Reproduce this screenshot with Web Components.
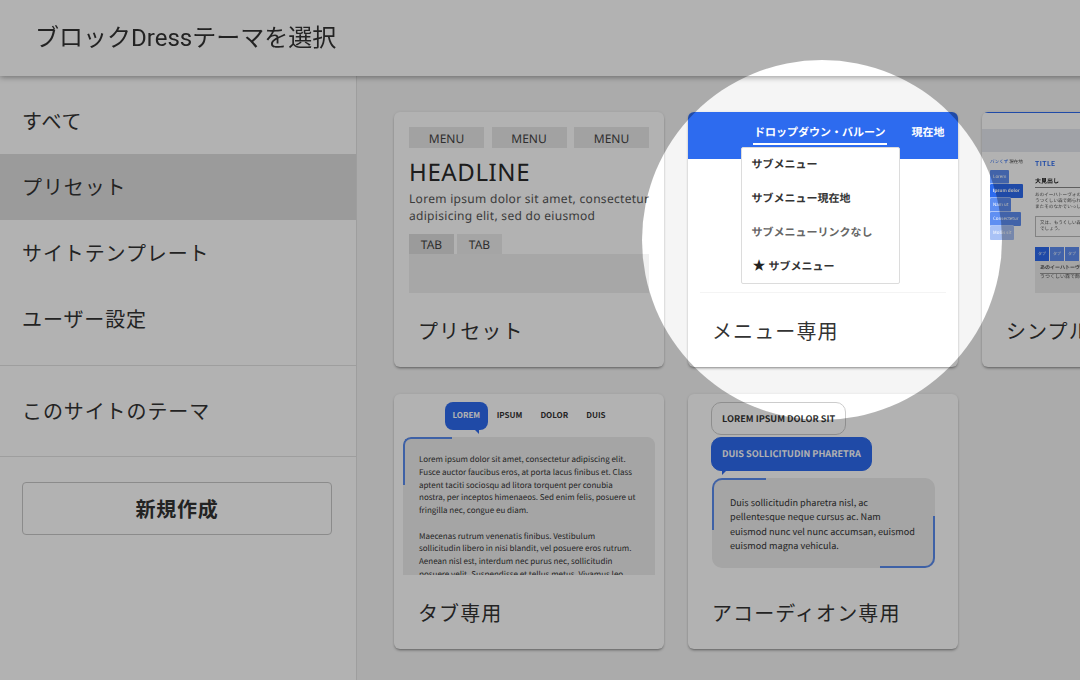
<!DOCTYPE html>
<html lang="ja">
<head>
<meta charset="utf-8">
<title>ブロックDressテーマを選択</title>
<style>
  html, body { margin: 0; height: 100%; overflow: hidden; background: #f5f5f5; }
  body { font-family: Roboto, "Noto Sans CJK JP", sans-serif; color: #333; }
</style>
</head>
<body>
<theme-dialog>
  <span slot="title">ブロックDressテーマを選択</span>
  <theme-sidebar slot="sidebar"></theme-sidebar>
  <theme-card>
    <preset-thumb></preset-thumb>
    <span slot="label">プリセット</span>
  </theme-card>
  <theme-card>
    <menu-thumb></menu-thumb>
    <span slot="label">メニュー専用</span>
  </theme-card>
  <theme-card>
    <simple-thumb></simple-thumb>
    <span slot="label">シンプル</span>
  </theme-card>
  <theme-card>
    <tab-thumb></tab-thumb>
    <span slot="label">タブ専用</span>
  </theme-card>
  <theme-card>
    <accordion-thumb></accordion-thumb>
    <span slot="label">アコーディオン専用</span>
  </theme-card>
</theme-dialog>
<spot-light></spot-light>

<script>
const JP = `Roboto, "Noto Sans CJK JP", sans-serif`;
const THUMB = `"Noto Sans CJK JP", sans-serif`;

class ThemeDialog extends HTMLElement {
  constructor() {
    super();
    this.attachShadow({ mode: "open" });
  }
  connectedCallback() {
    this.shadowRoot.innerHTML = /*html*/ `
      <style>
        :host { display: grid; grid-template-columns: 357px 1fr; grid-template-rows: 76px 1fr;
          width: 1080px; height: 680px; overflow: hidden; font-family: ${JP}; filter: blur(.45px); }
        .header { grid-column: 1 / 3; position: relative; z-index: 2; background: #fff;
          display: flex; align-items: center; padding: 0 35px 6px; font-size: 24px; color: #333;
          box-shadow: 0 1px 6px rgba(0,0,0,.4); }
        .side { border-right: 1px solid #e2e2e2; background: #fff; }
        .cards { display: grid; grid-template-columns: repeat(3, 270px); grid-auto-rows: 255px;
          column-gap: 24px; row-gap: 27px; padding: 36px 0 0 37px; background: #f5f5f5; }
      </style>
      <div class="header"><slot name="title"></slot></div>
      <div class="side"><slot name="sidebar"></slot></div>
      <div class="cards"><slot></slot></div>
    `;
  }
}

class ThemeSidebar extends HTMLElement {
  constructor() {
    super();
    this.attachShadow({ mode: "open" });
  }
  connectedCallback() {
    this.shadowRoot.innerHTML = /*html*/ `
      <style>
        :host { display: block; }
        .group { padding: 12px 0 13px; border-bottom: 1px solid #e2e2e2; }
        .group--last { padding-bottom: 12px; }
        .item { height: 66px; box-sizing: border-box; display: flex; align-items: center; padding: 0 0 2px 22px;
          font-size: 20px; letter-spacing: .9px; color: #333; }
        .item--on { background: #dfdfdf; }
        .action { padding: 25px 24px 0 22px; }
        .button { height: 53px; box-sizing: border-box; display: flex; align-items: center; justify-content: center;
          border: 1.5px solid #c8c8c8; border-radius: 4px; font-size: 20px; font-weight: 700; letter-spacing: .8px; color: #333; }
      </style>
      <div class="group">
        <div class="item">すべて</div>
        <div class="item item--on">プリセット</div>
        <div class="item">サイトテンプレート</div>
        <div class="item">ユーザー設定</div>
      </div>
      <div class="group group--last">
        <div class="item">このサイトのテーマ</div>
      </div>
      <div class="action"><div class="button">新規作成</div></div>
    `;
  }
}

class ThemeCard extends HTMLElement {
  constructor() {
    super();
    this.attachShadow({ mode: "open" });
  }
  connectedCallback() {
    this.shadowRoot.innerHTML = /*html*/ `
      <style>
        :host { display: flex; flex-direction: column; background: #fff; border-radius: 6px; overflow: hidden;
          box-shadow: 0 2px 3px -1px rgba(0,0,0,.45), 0 0 3px rgba(0,0,0,.08); }
        .thumb { height: 181px; overflow: hidden; position: relative; flex: none; text-rendering: geometricPrecision; }
        .label { flex: 1; display: flex; align-items: center; padding: 0 24px; white-space: nowrap;
          font-size: 20px; letter-spacing: 1.1px; color: #333; }
      </style>
      <div class="thumb"><slot></slot></div>
      <div class="label"><slot name="label"></slot></div>
    `;
  }
}

class PresetThumb extends HTMLElement {
  constructor() {
    super();
    this.attachShadow({ mode: "open" });
  }
  connectedCallback() {
    this.shadowRoot.innerHTML = /*html*/ `
      <style>
        :host { display: block; padding: 15px 15px 0; font-family: "Noto Sans", sans-serif; color: #333; }
        .menu { display: grid; grid-template-columns: repeat(3, 75px); column-gap: 7.5px; }
        .menu span { height: 21px; padding-top: 2px; box-sizing: border-box; background: #e9e9e9; display: flex; align-items: center; justify-content: center;
          font-size: 12px; color: #444; }
        h3 { margin: 11px 0 0; font-size: 24px; line-height: 28px; font-weight: 400; letter-spacing: .6px; color: #2a2a2a; }
        p { margin: 3px 0 0; font-size: 12px; line-height: 17px; color: #555; white-space: nowrap; letter-spacing: .3px; }
        .tabs { display: flex; gap: 3px; margin-top: 10px; }
        .tabs span { width: 45px; height: 20px; background: #ededed; display: flex; align-items: center; justify-content: center;
          font-size: 12px; color: #444; }
        .tabs span:first-child { background: #dfdfdf; }
        .panel { height: 39px; background: #f0f0f0; }
      </style>
      <div class="menu"><span>MENU</span><span>MENU</span><span>MENU</span></div>
      <h3>HEADLINE</h3>
      <p>Lorem ipsum dolor sit amet, consectetur<br>adipisicing elit, sed do eiusmod</p>
      <div class="tabs"><span>TAB</span><span>TAB</span></div>
      <div class="panel"></div>
    `;
  }
}

class MenuThumb extends HTMLElement {
  constructor() {
    super();
    this.attachShadow({ mode: "open" });
  }
  connectedCallback() {
    this.shadowRoot.innerHTML = /*html*/ `
      <style>
        :host { display: block; height: 180px; border-bottom: 1px solid #f4f4f4; margin: 0 12px; position: relative;
          font-family: ${THUMB}; font-size: 11px; font-weight: 700; }
        .bar { margin: 0 -12px; height: 47px; background: #2d6bef; box-sizing: border-box; padding: 12px 0 0 65px;
          display: flex; gap: 24.5px; color: #fff; }
        .bar span { line-height: 16px; height: 19px; white-space: nowrap; }
        .bar .on { border-bottom: 2px solid #fff; padding: 0 1.5px 0 1px; }
        .drop { position: absolute; left: 40.5px; top: 35px; width: 159.5px; height: 137px; box-sizing: border-box;
          background: #fff; border: 1.5px solid #dcdcdc; border-radius: 2px; padding-left: 10px;
          display: grid; grid-auto-rows: 34px; align-items: start; color: #333; }
        .drop > span { line-height: 33px; white-space: nowrap; }
        .drop .off { color: #666; }
        .star { font-size: 13px; line-height: 11px; margin: 0 3px 0 1px; color: #222; }
      </style>
      <div class="bar"><span class="on">ドロップダウン・バルーン</span><span>現在地</span></div>
      <div class="drop">
        <span>サブメニュー</span>
        <span>サブメニュー現在地</span>
        <span class="off">サブメニューリンクなし</span>
        <span><span class="star">★</span>サブメニュー</span>
      </div>
    `;
  }
}

class SimpleThumb extends HTMLElement {
  constructor() {
    super();
    this.attachShadow({ mode: "open" });
  }
  connectedCallback() {
    this.shadowRoot.innerHTML = /*html*/ `
      <style>
        :host { display: block; height: 181px; font-family: ${THUMB}; font-size: 5px; line-height: 6px; color: #555;
          border-top: 1px solid #2d6bef; box-sizing: border-box; position: relative; filter: blur(.5px); }
        .top { height: 16px; text-align: center; font-weight: 700; line-height: 16px; padding-left: 180px; }
        .hero { height: 23px; background: #e6e9f0; }
        .body { display: grid; grid-template-columns: 45px 1fr; padding: 7px 0 0 8px; }
        .crumb { font-size: 4.5px; white-space: nowrap; color: #444; }
        .crumb b { color: #2d6bef; font-weight: 400; }
        .list { display: flex; flex-direction: column; align-items: flex-start; margin-top: 5px; }
        .list span { background: #5f8ff2; color: #fff; font-size: 4.5px; height: 14px; line-height: 14px; padding: 0 3px; border-radius: 1px;
          white-space: nowrap; box-shadow: 0 0 0 .5px #fff; }
        .list .on { background: #2d6bef; font-weight: 700; }
        .list .faded { background: #a9c2f6; }
        h4 { margin: 0; font-size: 7px; line-height: 10px; color: #2d6bef; letter-spacing: .5px; font-family: Lato, sans-serif; }
        h5 { margin: 7px 0 0; padding-bottom: 2px; border-bottom: 1px solid #888; font-size: 6px; line-height: 9px; color: #222; }
        p { margin: 4px 0 0; white-space: nowrap; font-size: 4.6px; }
        .box { margin-top: 6px; height: 21px; border: 1px solid #bbb; padding: 3px 4px; box-sizing: border-box; white-space: nowrap; font-size: 4.6px; }
        .tabs { display: flex; gap: 1px; margin-top: 10px; }
        .tabs span { width: 14px; height: 14px; background: #5f8ff2; color: #fff; font-size: 4px; line-height: 14px; text-align: center; }
        .tabs span:first-child { background: #2d6bef; }
        .panel { background: #ececec; height: 40px; padding: 4px 5px; box-sizing: border-box; white-space: nowrap; }
        .panel div { border-bottom: 1px solid #999; padding-bottom: 2px; font-weight: 700; }
      </style>
      <div class="top">Site title</div>
      <div class="hero"></div>
      <div class="body">
        <div>
          <div class="crumb"><b>パンくず</b> 現在地</div>
          <div class="list">
            <span>Lorem</span>
            <span class="on">Ipsum dolor</span>
            <span>Nam ut</span>
            <span>Consectetur</span>
            <span class="faded">Mollis sit</span>
          </div>
        </div>
        <div>
          <h4>TITLE</h4>
          <h5>大見出し</h5>
          <p>あのイーハトーヴォのすきとおった風、夏でも底に冷たさをもつ青いそら<br>うつくしい森で飾られたモリーオ市、郊外のぎらぎらひかる草の波<br>またそのなかでいっしょになったたくさんのひとたち</p>
          <div class="box">又は、もうくしい森で飾られたモリーオ市<br>でしょう。</div>
          <div class="tabs"><span>タブ</span><span>タブ</span><span>タブ</span><span>タブ</span></div>
          <div class="panel"><div>あのイーハトーヴォ</div>うつくしい森で飾られた</div>
        </div>
      </div>
    `;
  }
}

class TabThumb extends HTMLElement {
  constructor() {
    super();
    this.attachShadow({ mode: "open" });
  }
  connectedCallback() {
    this.shadowRoot.innerHTML = /*html*/ `
      <style>
        :host { display: block; height: 181px; box-sizing: border-box; padding: 8px 9px 0; font-family: ${THUMB}; color: #333; }
        .nav { display: flex; padding-left: 42px; height: 28px; align-items: center;
          font-size: 8px; font-weight: 700; }
        .nav span { padding: 0 9px; line-height: 28px; }
        .nav .on { position: relative; background: #2d6bef; color: #fff; border-radius: 8px; padding: 0 7.5px; }
        .nav .on::after { content: ""; position: absolute; right: 9px; bottom: -4px; border-top: 4px solid #2d6bef; border-left: 4px solid transparent; }
        .panel { position: relative; margin-top: 7px; height: 138px; background: #ececec; border-radius: 8px 8px 0 0;
          padding: 17px 0 0 16px; box-sizing: border-box; font-size: 8px; line-height: 12.8px; white-space: nowrap; overflow: hidden; }
        .panel::before { content: ""; position: absolute; left: 0; top: 0; width: 49px; height: 48px; box-sizing: border-box;
          border: solid #5a8bee; border-width: 2px 0 0 2px; border-top-left-radius: 8px; }
        p { margin: 0 0 12.6px; }
      </style>
      <div class="nav"><span class="on">LOREM</span><span>IPSUM</span><span>DOLOR</span><span>DUIS</span></div>
      <div class="panel">
        <p>Lorem ipsum dolor sit amet, consectetur adipiscing elit.<br>Fusce auctor faucibus eros, at porta lacus finibus et. Class<br>aptent taciti sociosqu ad litora torquent per conubia<br>nostra, per inceptos himenaeos. Sed enim felis, posuere ut<br>fringilla nec, congue eu diam.</p>
        <p>Maecenas rutrum venenatis finibus. Vestibulum<br>sollicitudin libero in nisi blandit, vel posuere eros rutrum.<br>Aenean nisl est, interdum nec purus nec, sollicitudin<br>posuere velit. Suspendisse et tellus metus. Vivamus leo</p>
      </div>
    `;
  }
}

class AccordionThumb extends HTMLElement {
  constructor() {
    super();
    this.attachShadow({ mode: "open" });
  }
  connectedCallback() {
    this.shadowRoot.innerHTML = /*html*/ `
      <style>
        :host { display: block; height: 181px; box-sizing: border-box; padding: 8px 23px 0; font-family: ${THUMB}; color: #333; }
        .head { display: block; width: fit-content; box-sizing: border-box; height: 33px; line-height: 31px; padding: 0 10px;
          border: 1.5px solid #ccc; border-radius: 10px; font-size: 9.15px; font-weight: 700; white-space: nowrap; }
        .head--open { position: relative; margin-top: 2px; height: 34px; line-height: 31px; background: #2d6bef; border-color: #2d6bef; color: #fff; }
        .head--open::after { content: ""; position: absolute; left: 10px; bottom: -4.5px; border-top: 4px solid #2d6bef; border-right: 4px solid transparent; }
        .panel { position: relative; margin: 7px 0 0 1px; width: 223px; height: 90px; box-sizing: border-box; background: #ececec; border-radius: 10px;
          padding: 17px 0 0 18px; font-size: 9.15px; line-height: 14.4px; white-space: nowrap; }
        .panel::before, .panel::after { content: ""; position: absolute; box-sizing: border-box; border: solid #5a8bee; }
        .panel::before { left: 0; top: 0; width: 54px; height: 52px; border-width: 2px 0 0 2px; border-top-left-radius: 10px; }
        .panel::after { right: 0; bottom: 0; width: 55px; height: 52px; border-width: 0 2px 2px 0; border-bottom-right-radius: 10px; }
      </style>
      <div class="head">LOREM IPSUM DOLOR SIT</div>
      <div class="head head--open">DUIS SOLLICITUDIN PHARETRA</div>
      <div class="panel">Duis sollicitudin pharetra nisl, ac<br>pellentesque neque cursus ac. Nam<br>euismod nunc vel nunc accumsan, euismod<br>euismod magna vehicula.</div>
    `;
  }
}

class SpotLight extends HTMLElement {
  constructor() {
    super();
    this.attachShadow({ mode: "open" });
  }
  connectedCallback() {
    this.shadowRoot.innerHTML = /*html*/ `
      <style>
        :host { position: fixed; left: 642px; top: 60px; width: 360px; height: 360px; border-radius: 50%;
          box-shadow: 0 0 0 1400px rgba(0,0,0,.3); pointer-events: none; }
      </style>
    `;
  }
}

customElements.define("theme-dialog", ThemeDialog);
customElements.define("theme-sidebar", ThemeSidebar);
customElements.define("theme-card", ThemeCard);
customElements.define("preset-thumb", PresetThumb);
customElements.define("menu-thumb", MenuThumb);
customElements.define("simple-thumb", SimpleThumb);
customElements.define("tab-thumb", TabThumb);
customElements.define("accordion-thumb", AccordionThumb);
customElements.define("spot-light", SpotLight);
</script>
</body>
</html>
